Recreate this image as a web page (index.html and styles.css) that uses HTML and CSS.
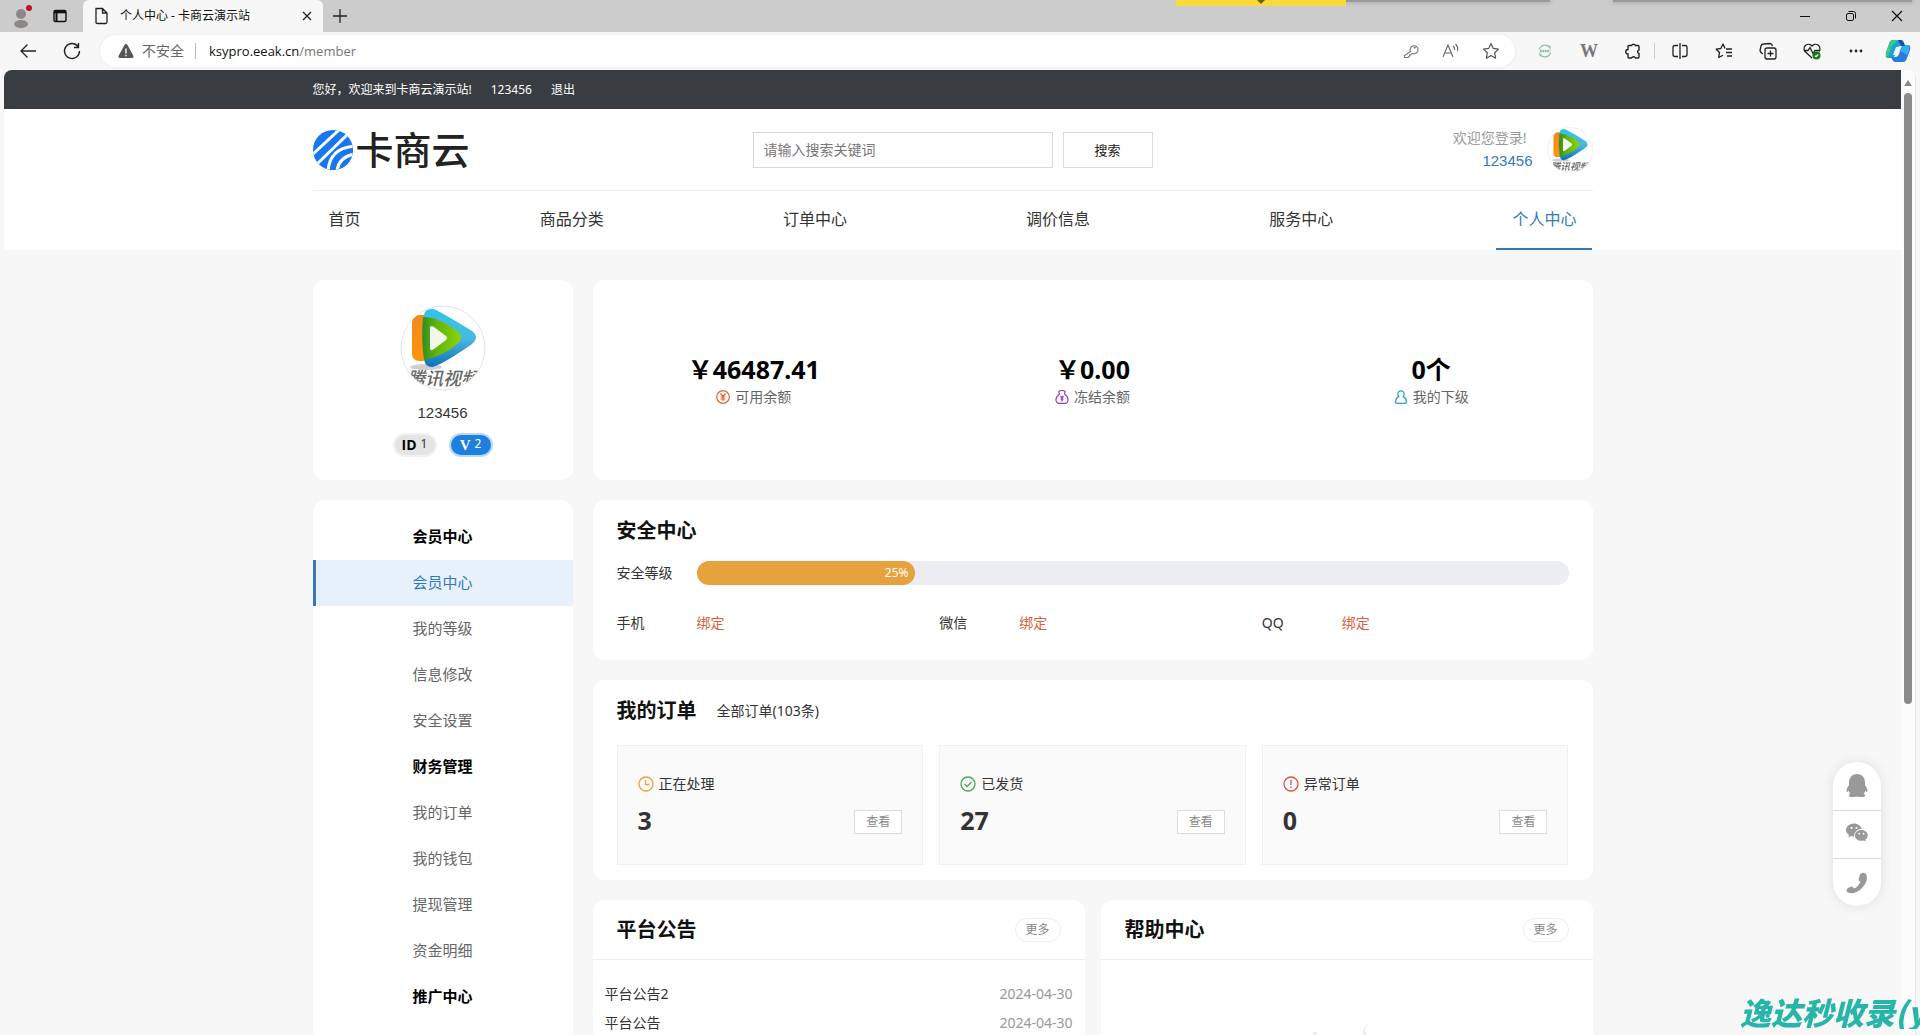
FILE: index.html
```html
<!DOCTYPE html>
<html lang="zh-CN">
<head>
<meta charset="utf-8">
<title>个人中心 - 卡商云演示站</title>
<link rel="stylesheet" href="styles.css">
</head>
<body>
<svg class="defs" aria-hidden="true">
  <defs>
    <linearGradient id="g-blue" x1="0" y1="0" x2="0" y2="1"><stop offset="0" stop-color="#2fc4e6"/><stop offset=".5" stop-color="#4ab9e2"/><stop offset="1" stop-color="#0f6fb8"/></linearGradient>
    <linearGradient id="g-orange" x1="0" y1="0" x2="0" y2="1"><stop offset="0" stop-color="#f08a1c"/><stop offset="1" stop-color="#ff9310"/></linearGradient>
    <linearGradient id="g-green" x1="0" y1="0" x2="1" y2="0"><stop offset="0" stop-color="#2f8f1d"/><stop offset=".4" stop-color="#63b512"/><stop offset="1" stop-color="#8fd400"/></linearGradient>
    <clipPath id="round"><circle cx="43" cy="43" r="42"/></clipPath>
    <symbol id="avatar" viewBox="0 0 86 86">
      <g clip-path="url(#round)">
        <rect width="86" height="86" fill="#fff"/>
        <ellipse cx="26" cy="62" rx="16" ry="3" fill="#cfcfcf"/>
        <rect x="12" y="10" width="18" height="46" rx="7" fill="url(#g-orange)"/>
        <path d="M24 10q1-7 9-6 5 1 39 22 8 6 0 13Q42 60 32 62q-7 0-8-8z" fill="url(#g-blue)"/>
        <path d="M23 12q14-1 34 14 8 6 0 13-14 12-33 16-3-20-1-43z" fill="url(#g-green)"/>
        <path d="M30 22q1-2 4 0l12 9q2 2 0 4l-12 9q-4 3-4-1z" fill="#f3f6ea"/>
        <text x="7" y="80" class="avatar-text">腾讯视频</text>
      </g>
      <circle cx="43" cy="43" r="42" fill="none" stroke="#e4e4e4"/>
    </symbol>
  </defs>
</svg>

<header class="tabs">
  <button class="profile" aria-label="个人资料"><svg width="28" height="28" viewBox="0 0 28 28"><circle cx="13" cy="12" r="5" fill="#8d8885"/><ellipse cx="13" cy="22" rx="7" ry="4" fill="#8d8885"/><circle cx="21" cy="6" r="3" fill="#c50f1f"/></svg></button>
  <button class="tabmenu" aria-label="标签操作菜单"><svg width="16" height="16" viewBox="0 0 16 16" fill="none" stroke="#111" stroke-width="1.4"><rect x="2" y="2.500" width="12" height="11" rx="1.500"/><path d="M2 4h12" stroke-width="2.600"/><path d="M4.500 5v8" stroke-width="2"/></svg></button>
  <div class="tab">
    <svg width="16" height="18" viewBox="0 0 16 18" fill="none" stroke="#222" stroke-width="1.300"><path d="M3 1.500h6.500L14 6v9q0 1.500-1.500 1.500h-8Q3 16.500 3 15zM9.500 1.500V6H14"/></svg>
    <span class="tab-title">个人中心 - 卡商云演示站</span>
    <button class="tab-close" aria-label="关闭标签"><svg width="10" height="10" viewBox="0 0 10 10" stroke="#222" stroke-width="1.300"><path d="M1 1l8 8M9 1L1 9"/></svg></button>
  </div>
  <button class="newtab" aria-label="新建标签"><svg width="14" height="14" viewBox="0 0 14 14" stroke="#222" stroke-width="1.300"><path d="M7 0v14M0 7h14"/></svg></button>
  <div class="window">
    <button aria-label="最小化"><svg width="12" height="12" viewBox="0 0 12 12" stroke="#111"><path d="M1 6.500h10"/></svg></button>
    <button aria-label="还原"><svg width="12" height="12" viewBox="0 0 12 12" fill="none" stroke="#111"><rect x="1.500" y="3.500" width="7" height="7" rx="1.500"/><path d="M3.500 1.500h5q2 0 2 2v5"/></svg></button>
    <button aria-label="关闭"><svg width="12" height="12" viewBox="0 0 12 12" stroke="#111" stroke-width="1.200"><path d="M1 1l10 10M11 1L1 11"/></svg></button>
  </div>
  <i class="shade shade-a"></i><i class="shade shade-b"></i><i class="peek"></i>
</header>

<div class="toolbar">
  <button class="tool" aria-label="后退"><svg width="20" height="20" viewBox="0 0 20 20" fill="none" stroke="#222" stroke-width="1.300"><path d="M18 10H3M9.500 3.500L3 10l6.500 6.500"/></svg></button>
  <button class="tool" aria-label="刷新"><svg width="20" height="20" viewBox="0 0 20 20" fill="none" stroke="#222" stroke-width="1.400"><path d="M16 5.500A7.500 7.500 0 1 0 17.500 10M16.500 2v4.500H12"/></svg></button>
  <div class="address">
    <svg width="16" height="16" viewBox="0 0 16 16"><path d="M8 1q1 0 1.500 1L15.500 13q.5 2-1.500 2H2q-2 0-1.500-2L6.500 2Q7 1 8 1z" fill="#555"/><path d="M8 5.500v5M8 11.800v1.500" stroke="#fff" stroke-width="1.400"/></svg>
    <span class="insecure">不安全</span>
    <span class="url">ksypro.eeak.cn<span class="path">/member</span></span>
    <button aria-label="密码"><svg width="16" height="16" viewBox="0 0 16 16" fill="none" stroke="#777" stroke-width="1.100"><path d="M7.500 8.500a4 4 0 1 1 2.300 2l-1.300.3-.7 1.200H6.500v1.300L5 14.500H1.500v-2z"/><circle cx="11.700" cy="4.600" r=".5"/></svg></button>
    <button aria-label="朗读"><svg width="18" height="16" viewBox="0 0 18 16" fill="none" stroke="#666" stroke-width="1.100"><path d="M1 14L6 2l5 12M3 10h6M11 3q2 1.500 1.500 4M13.500 1q3 3 2 7"/></svg></button>
    <button aria-label="收藏"><svg width="18" height="18" viewBox="0 0 18 18" fill="none" stroke="#555" stroke-width="1.200" stroke-linejoin="round"><path d="M9 1.500l2.300 4.900 5.200.7-3.800 3.700.9 5.400L9 13.600l-4.600 2.600.9-5.400L1.500 7.100l5.200-.7z"/></svg></button>
  </div>
  <button class="tool" aria-label="扩展 1"><svg width="14" height="14" viewBox="0 0 14 14" fill="none" stroke="#8fbfa6" stroke-width="1.200"><path d="M1.500 5.500a5.700 5.700 0 0 1 10.500-1.500V1.500M12.500 8.500A5.700 5.700 0 0 1 2 10v2.500"/><path d="M2 7h10" stroke-width="2.400" stroke-dasharray="1.800 .6"/></svg></button>
  <button class="tool wiki" aria-label="扩展 2">W</button>
  <button class="tool divided" aria-label="扩展"><svg width="18" height="18" viewBox="0 0 18 18" fill="none" stroke="#222" stroke-width="1.400"><path d="M4 4.500q0-1 1-1h2.500a2.200 2.200 0 0 1 4 0H14q1 0 1 1V8a1.800 1.800 0 0 0 0 3.500V15q0 1-1 1h-2.500a2.200 2.200 0 0 0-4 0H5q-1 0-1-1v-3a2 2 0 0 1 0-4.500z"/></svg></button>
  <button class="tool" aria-label="分屏"><svg width="18" height="18" viewBox="0 0 18 18" fill="none" stroke="#222" stroke-width="1.300"><path d="M7 3.500H4q-2 0-2 2v7q0 2 2 2h3M11 3.500h3q2 0 2 2v7q0 2-2 2h-3M9 1v16"/></svg></button>
  <button class="tool" aria-label="收藏夹"><svg width="18" height="18" viewBox="0 0 18 18" fill="none" stroke="#222" stroke-width="1.300" stroke-linejoin="round"><path d="M10 6.500L8 2 5.800 6.500l-4.600.7 3.300 3.300-.8 5L8 13.200M11 7h6M11 10.500h6M12 14h5"/></svg></button>
  <button class="tool" aria-label="集锦"><svg width="18" height="18" viewBox="0 0 18 18" fill="none" stroke="#222" stroke-width="1.300"><rect x="6" y="6" width="11" height="11" rx="2"/><path d="M11.500 8.500v6M8.500 11.500h6M4 12Q1.500 11 1 8.500L2 4q.5-2 2.500-2L11 1.500q2 .3 2.500 2.500"/></svg></button>
  <button class="tool" aria-label="浏览器概要"><svg width="18" height="18" viewBox="0 0 18 18" fill="none" stroke="#222" stroke-width="1.300"><path d="M9 16L2 9.500A4.300 4.300 0 0 1 9 4a4.300 4.300 0 0 1 7 5.500M1 8.500h4l2-3 3 6 2-3h4"/><circle cx="13.500" cy="13.500" r="4" fill="#107c10" stroke="none"/><path d="M12 13.700l1.200 1 2-2.200" stroke="#fff"/></svg></button>
  <button class="tool" aria-label="更多"><svg width="16" height="4" viewBox="0 0 16 4" fill="#222"><circle cx="3" cy="2" r="1.400"/><circle cx="8" cy="2" r="1.400"/><circle cx="13" cy="2" r="1.400"/></svg></button>
  <button class="tool copilot" aria-label="Copilot"><svg width="26" height="24" viewBox="0 0 26 24"><path d="M8 1h8q2 0 3 3l1 3h-5q-2 0-3 3l-2 6q-1 3-3 3H3q-3 0-2-5L4 5q1-4 4-4z" fill="#17a4c8"/><path d="M7 7l-4 11q-3-1-2-5L4 5q1-4 4-4h5z" fill="#3fc48d"/><path d="M18 23h-8q-2 0-3-3l-1-2h5q2 0 3-3l2-6q1-3 3-3h4q3 0 2 5l-3 8q-1 4-4 4z" fill="#2a7be0"/><path d="M19 6h3q3 0 2 5l-2 5-6-4q1-6 3-6z" fill="#2fb3f0"/><path d="M13 1h3q2 0 3 3l1 3h-4z" fill="#1b4fae"/><path d="M11 8h3l-2 8H8z" fill="#eaf6ff"/></svg></button>
</div>

<div class="frame">
  <div class="site">
    <div class="topbar"><div class="wrap">
      <span>您好，欢迎来到卡商云演示站!</span><a href="#">123456</a><a href="#">退出</a>
    </div></div>
    <div class="head">
      <div class="wrap brandrow">
        <a class="logo" href="#">
          <svg width="40" height="40" viewBox="0 0 40 40"><defs><clipPath id="disc"><circle cx="20" cy="20" r="20"/></clipPath></defs><g clip-path="url(#disc)"><rect width="40" height="40" fill="#1677f0"/><g fill="none" stroke="#fff" stroke-width="3"><path d="M27-1L-1 25"/><path d="M35 4L3 35"/></g><path d="M14 42Q15 17 42 15V42z" fill="#1677f0"/><g fill="none" stroke="#fff" stroke-width="3"><path d="M15 42Q16 18 42 16"/><path d="M24 42Q25 27 42 24"/></g></g></svg>
          <span>卡商云</span>
        </a>
        <form class="search">
          <input type="text" aria-label="搜索" placeholder="请输入搜索关键词">
          <button type="button">搜索</button>
        </form>
        <div class="user">
          <div class="hello"><span>欢迎您登录!</span><a href="#">123456</a></div>
          <svg width="46" height="46"><use href="#avatar"/></svg>
        </div>
      </div>
      <nav class="wrap mainnav">
        <a href="#">首页</a><a href="#">商品分类</a><a href="#">订单中心</a><a href="#">调价信息</a><a href="#">服务中心</a><a class="on" href="#">个人中心</a>
      </nav>
    </div>

    <div class="wrap content">
      <aside class="side">
        <section class="card profilecard">
          <svg width="86" height="86"><use href="#avatar"/></svg>
          <div class="name">123456</div>
          <div class="badges"><span class="badge"><b>ID</b>1</span><span class="badge vip"><b>V</b>2</span></div>
        </section>
        <nav class="card sidenav">
          <h3>会员中心</h3>
          <a class="on" href="#">会员中心</a><a href="#">我的等级</a><a href="#">信息修改</a><a href="#">安全设置</a>
          <h3>财务管理</h3>
          <a href="#">我的订单</a><a href="#">我的钱包</a><a href="#">提现管理</a><a href="#">资金明细</a>
          <h3>推广中心</h3>
        </nav>
      </aside>
      <main class="main">
        <section class="card stats">
          <div><strong>￥46487.41</strong><span><svg width="14" height="14" viewBox="0 0 14 14" fill="none" stroke="#e2632f" stroke-width="1.200"><circle cx="7" cy="7" r="6.300"/><path d="M4.500 3.500L7 6.500l2.500-3M7 6.500V11M4.500 7h5M4.500 9h5"/></svg>可用余额</span></div>
          <div><strong>￥0.00</strong><span><svg width="14" height="14" viewBox="0 0 14 14" fill="none" stroke="#8e3fb0" stroke-width="1.100"><path d="M4.500 4L3.800 1.500Q7-.5 10.200 1.500L9.500 4Q13.500 7 13 10.500 12.500 13.400 10 13.400H4Q1.500 13.400 1 10.500.5 7 4.500 4z"/><path d="M5.500 6l1.500 1.500L8.500 6M7 7.500V11.500M5.500 8h3M5.500 9.700h3"/></svg>冻结余额</span></div>
          <div><strong>0个</strong><span><svg width="14" height="14" viewBox="0 0 14 14" fill="none" stroke="#2f9fc9" stroke-width="1.200"><path d="M4.800 6.400a3.200 3.200 0 1 1 4.400 0Q12.300 8 12.500 12q0 1.300-1.300 1.300H2.800Q1.500 13.300 1.500 12 1.700 8 4.800 6.400z"/></svg>我的下级</span></div>
        </section>

        <section class="card safety">
          <h2>安全中心</h2>
          <div class="level"><span class="key">安全等级</span><div class="bar"><div class="fill" style="width:25%">25%</div></div></div>
          <div class="cols">
            <div><span class="key">手机</span><a href="#">绑定</a></div>
            <div><span class="key">微信</span><a href="#">绑定</a></div>
            <div><span class="key">QQ</span><a href="#">绑定</a></div>
          </div>
        </section>

        <section class="card orders">
          <div class="title"><h2>我的订单</h2><a href="#">全部订单(103条)</a></div>
          <div class="cols">
            <div class="order"><span class="state"><svg width="16" height="16" viewBox="0 0 16 16" fill="none" stroke="#e6a23c" stroke-width="1.300"><circle cx="8" cy="8" r="7"/><path d="M7.500 4v4.500h4"/></svg>正在处理</span><div class="count"><strong>3</strong><button>查看</button></div></div>
            <div class="order"><span class="state"><svg width="16" height="16" viewBox="0 0 16 16" fill="none" stroke="#43a854" stroke-width="1.300"><circle cx="8" cy="8" r="7"/><path d="M4.500 8l2.500 2.500 4.500-4.500"/></svg>已发货</span><div class="count"><strong>27</strong><button>查看</button></div></div>
            <div class="order"><span class="state"><svg width="16" height="16" viewBox="0 0 16 16" fill="none" stroke="#d9534a" stroke-width="1.300"><circle cx="8" cy="8" r="7"/><path d="M8 4v5M8 10.500v1.500"/></svg>异常订单</span><div class="count"><strong>0</strong><button>查看</button></div></div>
          </div>
        </section>

        <div class="pair">
          <section class="card news">
            <div class="newshead"><h2>平台公告</h2><button>更多</button></div>
            <ul>
              <li><a href="#">平台公告2</a><time>2024-04-30</time></li>
              <li><a href="#">平台公告</a><time>2024-04-30</time></li>
            </ul>
          </section>
          <section class="card news">
            <div class="newshead"><h2>帮助中心</h2><button>更多</button></div>
            <div class="empty"><svg width="80" height="60" viewBox="0 0 80 60" fill="#e9e9e9"><path d="M62 0q-8 6 0 14 4 3 2 6-9-5-8-12 1-6 6-8zM6 8q3-2 4 4H6zM20 30h42l8 20H12z"/></svg></div>
          </section>
        </div>
      </main>
    </div>
  </div>
  <div class="scroll"><i class="up"></i><i class="thumb"></i></div>
</div>

<div class="float">
  <button aria-label="QQ客服"><svg width="24" height="24" viewBox="0 0 24 24" fill="#999"><path d="M12 0q7 0 8 8v3q3 4 2.300 7-1 0-1.800-1.500-.5 2-1.800 3.200 2 1 1.500 2.500-3 1.500-6.700.5h-3q-3.700 1-6.700-.5-.5-1.500 1.500-2.500-1.300-1.200-1.800-3.200Q2.700 18 1.700 18 1 15 4 11V8q1-8 8-8z"/></svg></button>
  <button aria-label="微信客服"><svg width="24" height="24" viewBox="0 2 24 24" fill="#999"><path d="M9 2.500c-4.500 0-8 3-8 6.600 0 2 1.200 3.800 3 5L3.300 16.500 6 15q1.500.5 3.200.5A7 7 0 0 1 16.800 8C16 5 13 2.500 9 2.500z"/><path d="M16.500 9c-3.800 0-6.500 2.500-6.500 5.400s2.700 5.300 6.500 5.300q1.200 0 2.300-.3l2.200 1.200-.6-2q2.300-1.600 2.300-4.200c0-3-2.700-5.400-6.200-5.400z"/><g fill="#fff"><circle cx="6.500" cy="7" r="1.100"/><circle cx="11.500" cy="7" r="1.100"/><circle cx="14.300" cy="12.700" r=".9"/><circle cx="18.500" cy="12.700" r=".9"/></g></svg></button>
  <button aria-label="电话客服"><svg width="24" height="24" viewBox="0 0 24 24" fill="#999"><path d="M17 2q3-1 4.500 2 2 6-4 12.500T5 22q-3 0-3.500-2.500 0-1.500 1.500-2.500l2.500-1.300q1.500-.6 2.500.8l.8 1q3.500-1 6.700-6.500l-1-.8q-1.300-1-.7-2.500L15 3.500Q16 2.200 17 2z"/></svg></button>
</div>
<div class="mark">逸达秒收录(y</div>
</body>
</html>
```
FILE: styles.css
```css
* { box-sizing: border-box; }
body {
  margin: 0;
  height: 100vh;
  display: flex;
  flex-direction: column;
  overflow: hidden;
  background: #f7f7f7;
  color: #333;
  font: 14px/20px "Noto Sans", "Noto Sans CJK SC", sans-serif;
}
a { color: inherit; text-decoration: none; }
h2, h3 { margin: 0; }
button {
  display: flex;
  align-items: center;
  justify-content: center;
  padding: 0;
  border: 0;
  background: none;
  color: inherit;
  font: inherit;
}
.defs { position: absolute; width: 0; height: 0; }
.avatar-text { font: italic 500 18px "Noto Sans CJK SC", sans-serif; fill: #666; }

/* browser tabs */
.tabs {
  position: relative;
  display: flex;
  flex: none;
  height: 32px;
  background: #cccccc;
}
.profile { width: 44px; }
.tabmenu { width: 32px; }
.tab {
  display: flex;
  align-items: center;
  width: 240px;
  margin-left: 7px;
  padding: 0 10px;
  border-radius: 6px 6px 0 0;
  background: #f7f7f7;
  color: #111;
}
.tab-title { flex: 1; margin-left: 11px; font-size: 12px; }
.tab-close { width: 12px; height: 20px; }
.newtab { width: 34px; }
.window { display: flex; margin-left: auto; }
.window button { width: 46px; }
.shade { position: absolute; top: 0; height: 2px; background: #999; box-shadow: 0 0 4px 1px #aaa; }
.shade-a { left: 1346px; width: 204px; }
.shade-b { left: 1613px; right: 8px; }
.peek { position: absolute; top: 0; left: 1176px; width: 170px; height: 6px; background: #f8da3c; }
.peek::after {
  content: "";
  display: block;
  width: 0;
  margin: 0 auto;
  border: 4px solid transparent;
  border-top-color: #6b5f1a;
  border-bottom: 0;
}

/* browser toolbar */
.toolbar {
  display: flex;
  align-items: center;
  flex: none;
  height: 38px;
  padding: 0 2px 0 6px;
}
.tool { width: 44px; height: 32px; }
.copilot { width: 40px; }
.address {
  display: flex;
  align-items: center;
  flex: 1;
  height: 32px;
  margin: 0 8px 0 6px;
  padding: 0 4px 0 18px;
  border-radius: 16px;
  background: #fff;
  box-shadow: 0 0 3px #e4e4e4;
}
.address button { width: 40px; height: 32px; }
.insecure { margin-left: 8px; padding-right: 11px; border-right: 1px solid #bbb; line-height: 16px; color: #666; }
.url { flex: 1; margin-left: 13px; color: #111; font-family: "Open Sans", sans-serif; font-size: 13px; }
.path { color: #777; }
.wiki { font: bold 18px "Liberation Serif", serif; color: #777; }
.divided { margin-right: 3px; border-right: 1px solid #ccc; height: 16px; }

/* page frame */
.frame {
  display: flex;
  flex: 1;
  min-height: 0;
  margin: 0 4px;
  border-radius: 8px 8px 0 0;
  overflow: hidden;
  background: #fcfcfc;
}
.site { flex: 1; overflow: hidden; background: #f7f7f7; }
.scroll {
  display: flex;
  flex-direction: column;
  align-items: center;
  width: 15px;
  padding-top: 10px;
  border-right: 1px solid #e6e6e6;
}
.up { border: 4px solid transparent; border-top: 0; border-bottom: 6px solid #888; }
.thumb { width: 8px; height: 64%; margin-top: 7px; border-radius: 4px; background: #8b8b8b; }
.wrap { max-width: 1280px; margin: 0 auto; }

.topbar { background: #383d41; color: #fff; font-size: 12px; line-height: 39px; }
.topbar .wrap { display: flex; gap: 19px; }

.head { background: #fff; }
.brandrow {
  display: flex;
  align-items: center;
  height: 82px;
  border-bottom: 1px solid #eee;
}
.logo { display: flex; flex: none; align-items: center; gap: 3px; width: 440px; color: #222; }
.logo span { font: 500 38px/36px "Noto Sans CJK SC", sans-serif; padding-bottom: 4px; }
.search { display: flex; gap: 10px; }
.search input {
  width: 300px;
  height: 36px;
  padding: 0 10px;
  border: 1px solid #d9d9d9;
  font: inherit;
}
.search input::placeholder { color: #777; }
.search button { width: 90px; height: 36px; border: 1px solid #ddd; font-size: 13px; color: #222; }
.user { display: flex; align-items: center; gap: 14px; margin-left: auto; }
.hello { display: flex; flex-direction: column; gap: 3px; align-items: flex-end; color: #999; }
.hello span { padding-right: 6px; }
.hello a { color: #337ab7; font: 15px/20px "Liberation Sans", sans-serif; }
.mainnav { display: flex; justify-content: space-between; height: 59px; }
.mainnav a { padding: 0 16px; font-size: 16px; line-height: 57px; }
.mainnav .on { border-bottom: 2px solid #337ab7; color: #337ab7; }

.content { display: flex; gap: 20px; margin-top: 30px; }
.card { border-radius: 12px; background: #fff; }
.side { display: flex; flex-direction: column; gap: 20px; width: 260px; }
.profilecard { display: flex; flex-direction: column; align-items: center; height: 200px; padding-top: 25px; }
.name { margin-top: 12px; font: 15px/20px "Liberation Sans", sans-serif; }
.badges { display: flex; gap: 12px; margin-top: 10px; }
.badge {
  display: flex;
  gap: 4px;
  justify-content: center;
  width: 44px;
  height: 24px;
  border: 2px solid #f1f1f1;
  border-radius: 12px;
  background: #e4e4e4;
  font: 12px/18px "Noto Sans", sans-serif;
}
.badge b { font: bold 14px/20px "Open Sans", sans-serif; color: #000; }
.vip { border-color: #b9d9f8; background: #1e80dc; color: #fff; }
.vip b { font-family: "Liberation Serif", serif; font-size: 15px; color: #fff; }

.sidenav { padding: 14px 0 60px; text-align: center; font-size: 15px; }
.sidenav h3 { padding-bottom: 2px; font-size: 15px; line-height: 44px; color: #000; }
.sidenav a { display: block; padding-bottom: 2px; line-height: 44px; color: #666; }
.sidenav .on {
  padding-right: 3px;
  border-left: 3px solid #337ab7;
  background: #e6f1fb;
  color: #337ab7;
}

.main { display: flex; flex-direction: column; flex: 1; gap: 20px; }
h2 { font-size: 20px; line-height: 28px; color: #111; }
.stats { display: grid; grid-template-columns: repeat(3, 1fr); gap: 16px; align-items: center; height: 200px; padding-bottom: 2px; }
.stats div { display: flex; flex-direction: column; align-items: center; }
.stats strong { font-size: 25px; line-height: 36px; color: #000; }
.stats span { display: flex; align-items: center; gap: 5px; color: #666; }
.cols { display: grid; grid-template-columns: repeat(3, 1fr); gap: 16px; }
.safety { height: 160px; padding: 17px 24px; }
.level { display: flex; align-items: center; margin: 16px 0 28px; }
.key { flex: none; width: 80px; }
.bar { flex: 1; border-radius: 12px; background: #ebedf2; }
.fill { padding-right: 6px; border-radius: 12px; background: #e6a23c; color: #fff; font-size: 12px; line-height: 24px; text-align: right; }
.safety .cols div { display: flex; line-height: 20px; }
.safety .cols a { color: #d9603a; }

.orders { height: 200px; padding: 17px 24px; }
.title { display: flex; align-items: center; gap: 20px; margin-bottom: 20px; }
.order { height: 120px; padding: 28px 20px; border: 1px solid #f0f0f0; background: #fafafa; }
.state { display: flex; align-items: center; gap: 5px; }
.count { display: flex; align-items: center; justify-content: space-between; }
.count strong { font-size: 25px; line-height: 52px; }
.count button { width: 48px; height: 24px; margin-top: 4px; border: 1px solid #ddd; background: #fff; font-size: 12px; color: #888; }

.pair { display: grid; grid-template-columns: 1fr 1fr; gap: 16px; }
.newshead {
  display: flex;
  align-items: center;
  justify-content: space-between;
  height: 60px;
  padding: 0 24px;
  border-bottom: 1px solid #eee;
}
.newshead button { width: 46px; height: 24px; border: 1px solid #eee; border-radius: 12px; font-size: 12px; color: #888; }
.news ul { margin: 0; padding: 19px 12px; list-style: none; }
.news li { display: flex; justify-content: space-between; line-height: 29px; }
.news time { color: #999; }
.empty { display: flex; justify-content: center; padding-top: 64px; }

/* floating contacts */
.float {
  position: fixed;
  right: 39px;
  bottom: 129px;
  width: 48px;
  border-radius: 24px;
  background: #fff;
  box-shadow: 0 0 12px #ddd;
}
.float button { width: 48px; height: 48px; }
.float button + button { border-top: 1px solid #ddd; }
.mark {
  position: fixed;
  right: 0;
  bottom: 6px;
  width: 180px;
  overflow: hidden;
  white-space: nowrap;
  color: #26b5a8;
  font: italic 900 31px/34px "Noto Sans CJK SC", sans-serif;
}
```
